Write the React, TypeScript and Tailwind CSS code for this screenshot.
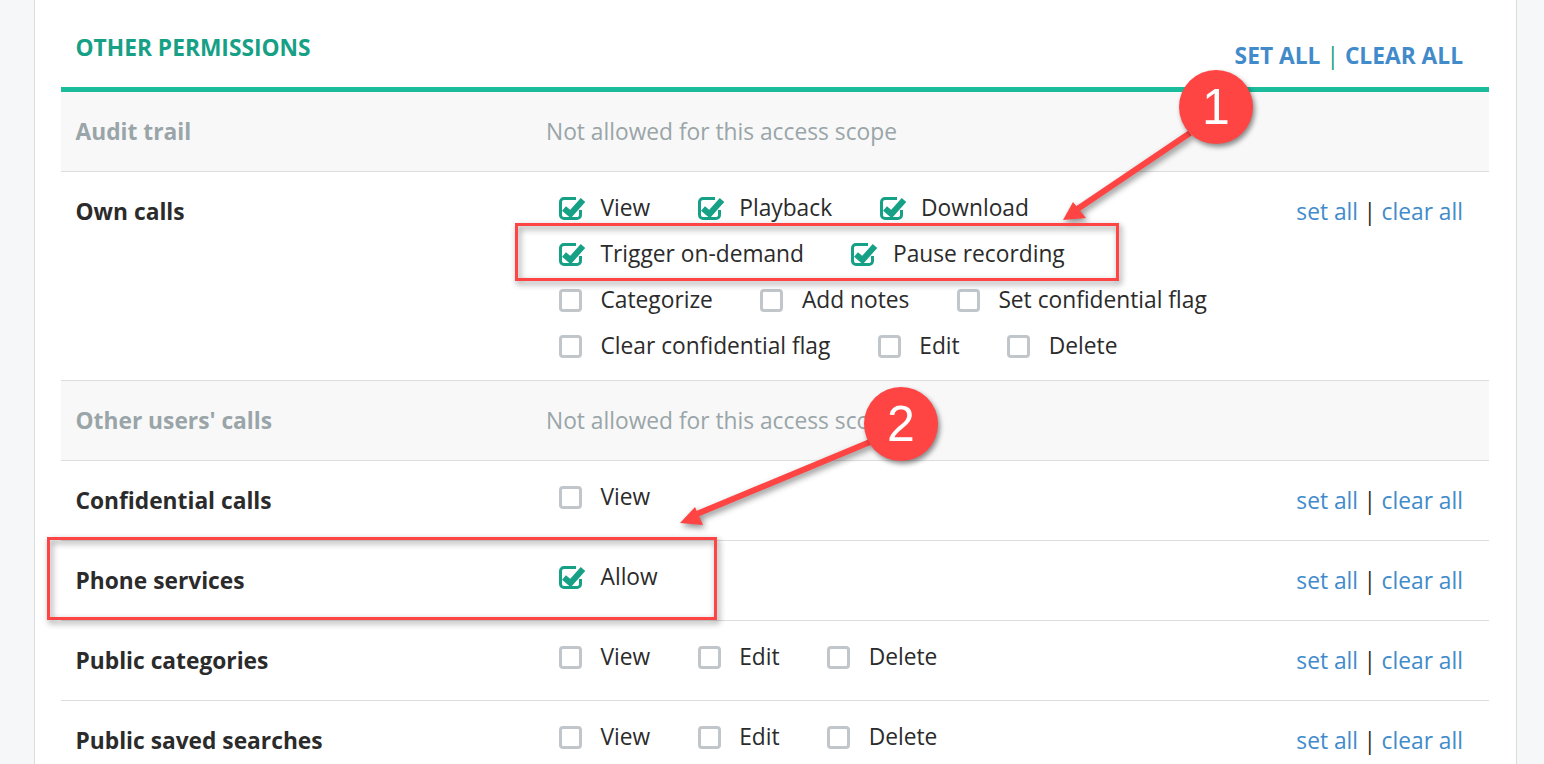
const SANS = "font-['Open_Sans',sans-serif]"

type Opt = [string, boolean?]

function Box({ on }: { on?: boolean }) {
  if (!on) {
    return <span className="block w-[23px] h-[23px] rounded-[4px] border-[3px] border-[#c1c6cb] bg-white shrink-0" />
  }
  return (
    <svg width="27" height="23" viewBox="0 0 27 23" className="shrink-0 overflow-visible" fill="none">
      <path d="M17 1.5H5A3.5 3.5 0 0 0 1.5 5v13A3.5 3.5 0 0 0 5 21.5h13a3.5 3.5 0 0 0 3.5-3.5v-5" stroke="#16a085" strokeWidth="3" />
      <path d="M5 11.5l6.5 5.5L24 3" stroke="#16a085" strokeWidth="6" />
    </svg>
  )
}

function Option({ label, on }: { label: string; on?: boolean }) {
  return (
    <div className={`flex items-center ${on ? 'gap-[15px]' : 'gap-[19px]'}`}>
      <Box on={on} />
      <span className="-ml-[0.5px]">{label}</span>
    </div>
  )
}

function OptionRow({ items }: { items: Opt[] }) {
  return (
    <div className="h-[46px] flex items-center gap-[47.5px] pl-[13px] text-[22.75px] text-[#2b2b2b]">
      {items.map(([l, on]) => (
        <Option key={l} label={l} on={on} />
      ))}
    </div>
  )
}

function Actions() {
  return (
    <div className="ml-auto pr-[26px] h-[80px] flex items-center text-[22.75px] text-[#428bca] whitespace-nowrap">
      set all<span className="mx-[5.5px] text-[#2b2b2b] font-normal">|</span>clear all
    </div>
  )
}

function Row({ label, rows }: { label: string; rows: Opt[][] }) {
  return (
    <div className="flex border-b border-[#dddddd] bg-white">
      <div className="w-[485px] pl-[14.5px] h-[80px] flex items-center text-[22.75px] font-bold text-[#2b2b2b]">{label}</div>
      <div className="pt-[13px] pb-[11px]">
        {rows.map((r, i) => (
          <OptionRow key={i} items={r} />
        ))}
      </div>
      <Actions />
    </div>
  )
}

function SimpleRow({ label, items }: { label: string; items: Opt[] }) {
  return (
    <div className="flex h-[80px] border-b border-[#dddddd] bg-white">
      <div className="w-[485px] pl-[14.5px] h-[80px] flex items-center text-[22.75px] font-bold text-[#2b2b2b]">{label}</div>
      <div className="pt-[13px]">
        <OptionRow items={items} />
      </div>
      <Actions />
    </div>
  )
}

function DisabledRow({ label }: { label: string }) {
  return (
    <div className="flex items-center h-[80px] pt-[2px] border-b border-[#dddddd] bg-[#f8f8f8] text-[22.75px] text-[#99a5a8]">
      <div className="w-[485px] pl-[14.5px] font-bold">{label}</div>
      <div>Not allowed for this access scope</div>
    </div>
  )
}

function Badge({ n, className }: { n: string; className: string }) {
  return (
    <div
      className={`absolute w-[74px] h-[74px] rounded-full bg-[#ff4444] shadow-[2px_3px_5px_rgba(0,0,0,0.45)] flex items-center justify-center text-white text-[50px] font-['Liberation_Sans',sans-serif] ${className}`}
    >
      {n}
    </div>
  )
}

function Annotations() {
  return (
    <>
      <svg
        className="absolute left-0 top-0 w-[1544px] h-[764px] pointer-events-none drop-shadow-[2px_3px_3px_rgba(0,0,0,0.45)]"
        viewBox="0 0 1544 764"
        fill="none"
      >
        <rect x="516.5" y="224.5" width="601" height="55" stroke="#ff4444" strokeWidth="3" />
        <rect x="48.5" y="538.5" width="667" height="80" stroke="#ff4444" strokeWidth="3" />
        <path d="M1190 133L1076 210" stroke="#ff4444" strokeWidth="6" />
        <path d="M1063 220L1073 202L1086 218Z" fill="#ff4444" />
        <path d="M870 442L692 516" stroke="#ff4444" strokeWidth="6" />
        <path d="M680 523L695 507L703 525Z" fill="#ff4444" />
      </svg>
      <Badge n="1" className="left-[1179px] top-[70px]" />
      <Badge n="2" className="left-[864px] top-[387px]" />
    </>
  )
}

export default function App() {
  return (
    <div className={`relative h-[764px] overflow-hidden bg-[#f6f7f9] ${SANS}`}>
      <div className="ml-[34px] w-[1483px] h-[764px] bg-white border-x border-[#dcdcdc] pl-[26px] pr-[27px] overflow-hidden">
        <div className="relative h-[87px]">
          <h2 className="absolute left-[14.5px] top-[33px] text-[22.75px] leading-[30px] font-bold text-[#16a085]">OTHER PERMISSIONS</h2>
          <div className="absolute right-[26px] top-[41px] text-[22.75px] leading-[30px] font-bold text-[#428bca]">
            SET ALL<span className="mx-[6px] font-normal text-[#16a085]">|</span>CLEAR ALL
          </div>
        </div>
        <div className="h-[5px] bg-[#1abc9c]" />
        <DisabledRow label="Audit trail" />
        <Row
          label="Own calls"
          rows={[
            [['View', true], ['Playback', true], ['Download', true]],
            [['Trigger on-demand', true], ['Pause recording', true]],
            [['Categorize'], ['Add notes'], ['Set confidential flag']],
            [['Clear confidential flag'], ['Edit'], ['Delete']],
          ]}
        />
        <DisabledRow label="Other users' calls" />
        <SimpleRow label="Confidential calls" items={[['View']]} />
        <SimpleRow label="Phone services" items={[['Allow', true]]} />
        <SimpleRow label="Public categories" items={[['View'], ['Edit'], ['Delete']]} />
        <SimpleRow label="Public saved searches" items={[['View'], ['Edit'], ['Delete']]} />
      </div>
      <Annotations />
    </div>
  )
}
